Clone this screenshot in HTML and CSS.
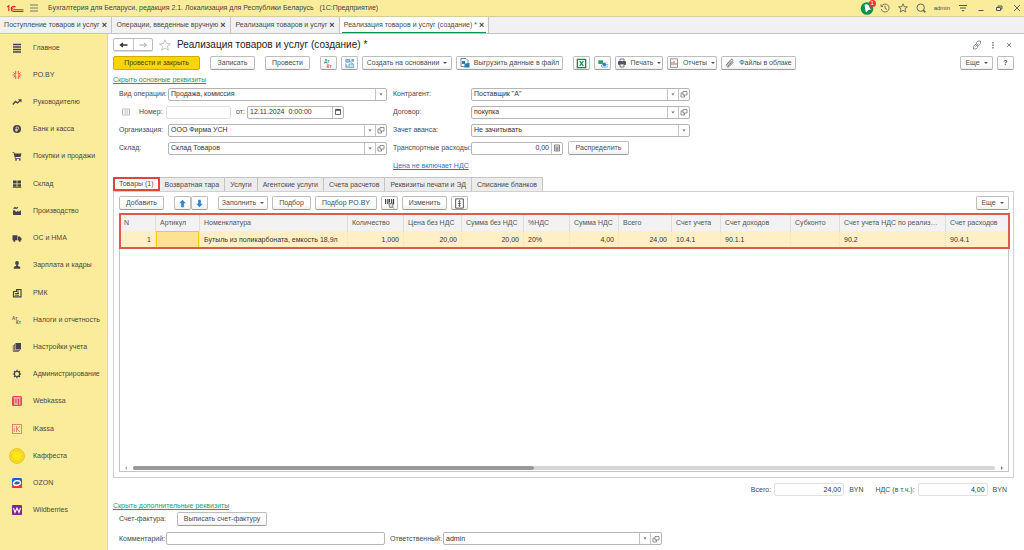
FILE: index.html
```
<!DOCTYPE html>
<html lang="ru">
<head>
<meta charset="utf-8">
<title>Бухгалтерия для Беларуси</title>
<link rel="stylesheet" href="styles.css">
</head>
<body>
<svg class="defs" aria-hidden="true">
  <symbol id="open" viewBox="0 0 8 8"><path d="M3 1.500h4v3.500h-4zM3 3H1v4h3.500V5" fill="none" stroke="#777" stroke-width=".8"/></symbol>
  <symbol id="caret" viewBox="0 0 8 8"><path d="M2.400 3h3.200L4 5z" fill="#666"/></symbol>
</svg>
<div class="app">
<header class="titlebar">
  <svg class="logo" viewBox="0 0 32 16"><g fill="none" stroke="#d8262c" stroke-width="2"><path d="M2 5.500 5 3v10"/><path d="M17 5.500A4.500 4.500 0 1 0 13 13h18"/><path d="M15 7A2 2 0 1 0 13 10h18" stroke-width="1.500"/></g></svg>
  <button class="ghost burger" aria-label="Меню"><svg viewBox="0 0 10 10"><path d="M1 2h8M1 5h8M1 8h8" stroke="#666" stroke-width=".9"/></svg></button>
  <span class="apptitle">Бухгалтерия для Беларуси, редакция 2.1. Локализация для Республики Беларусь&nbsp;&nbsp; (1С:Предприятие)</span>
  <div class="sys">
    <button class="ghost bell" aria-label="Уведомления"><svg viewBox="0 0 14 14"><circle cx="7" cy="7.500" r="6.300" fill="#0b9150"/><path d="M4.500 4c1.500-1.500 4.500-.5 5 2.500l1.500 2-3 .8-2 2.200-.5-2z" fill="#fff"/></svg><span class="badge">1</span></button>
    <button class="ghost" aria-label="История"><svg viewBox="0 0 10 10"><path d="M1.500 3.200A4 4 0 1 1 1.200 6M1 1.500v2h2M5 2.500V5.200L7 6.500" fill="none" stroke="#555" stroke-width=".8"/></svg></button>
    <button class="ghost" aria-label="Избранное"><svg viewBox="0 0 10 10"><path d="M5 .8l1.200 2.900 3.200.2-2.400 2 .8 3.100L5 7.300 2.200 9 3 5.900l-2.400-2 3.200-.2z" fill="none" stroke="#555" stroke-width=".8"/></svg></button>
    <button class="ghost" aria-label="Поиск"><svg viewBox="0 0 10 10"><circle cx="4.700" cy="4.700" r="3.700" fill="none" stroke="#555" stroke-width=".9"/><path d="M7 7l2.300 2.300" stroke="#555" stroke-width="1.500"/></svg></button>
    <span class="user">admin</span>
    <button class="ghost" aria-label="Настройки"><svg viewBox="0 0 10 10"><path d="M1 2.500h8M2 5h6" stroke="#555"/><path d="M3.500 7h3L5 8.800z" fill="#555"/></svg></button>
    <button class="ghost win" aria-label="Свернуть"><svg viewBox="0 0 10 10"><path d="M2.500 7.500h5" stroke="#555"/></svg></button>
    <button class="ghost win" aria-label="Восстановить"><svg viewBox="0 0 10 10"><path d="M2.500 4.500h4v3h-4zM4 4.500V3h4v3H6.500" fill="none" stroke="#555"/></svg></button>
    <button class="ghost win" aria-label="Закрыть"><svg viewBox="0 0 10 10"><path d="M2 2l6 6M8 2L2 8" stroke="#555" stroke-width=".9"/></svg></button>
  </div>
</header>
<nav class="wintabs">
  <a href="#" class="wt wt1">Поступление товаров и услуг <b>×</b></a>
  <a href="#" class="wt wt2">Операции, введенные вручную <b>×</b></a>
  <a href="#" class="wt wt3">Реализация товаров и услуг <b>×</b></a>
  <a href="#" class="wt wt4 active"><span>Реализация товаров и услуг (создание) * <b>×</b></span></a>
</nav>
<div class="body">
<nav class="side">
  <a href="#"><svg viewBox="0 0 10 10"><path d="M1 1.500h8M1 4h8M1 6.500h8M1 9h8" stroke="#45414d" stroke-width="1.300"/></svg>Главное</a>
  <a href="#"><svg viewBox="0 0 10 10"><path d="M3.700 1v3M6.300 1v3M3.700 6v3M6.300 6v3M.5 5h3M6.500 5h3M1.500 2.500L3.500 4.500M8.500 2.500L6.500 4.500M1.500 7.500l2-2M8.500 7.500l-2-2" stroke="#e0353c" stroke-width=".8"/></svg>PO.BY</a>
  <a href="#"><svg viewBox="0 0 10 10"><path d="M.8 7.500L3.500 4.500 5.500 6 8.500 3" fill="none" stroke="#45414d" stroke-width="1.300"/><path d="M6 2.200h3.500v3.300z" fill="#45414d"/></svg>Руководителю</a>
  <a href="#"><svg viewBox="0 0 10 10"><circle cx="5" cy="5" r="4" fill="#45414d"/><path d="M4.200 7.800V3h1.300a1.200 1.200 0 0 1 0 2.500H3.300M3.300 6.600h2.500" fill="none" stroke="#f9ec9c" stroke-width=".8"/></svg>Банк и касса</a>
  <a href="#"><svg viewBox="0 0 10 10"><path d="M.5 1.200h1.700l.5 1.300h6.800L8.500 6H3.300l.3 1h5v.8H3L1.600 2H.5z" fill="#45414d"/><circle cx="4" cy="8.800" r=".9" fill="#45414d"/><circle cx="7.800" cy="8.800" r=".9" fill="#45414d"/></svg>Покупки и продажи</a>
  <a href="#"><svg viewBox="0 0 10 10"><path d="M1 1.500h3.600v3H1zM5.400 1.500H9v3H5.400zM1 5.200h3.600v2.600H1zM5.400 5.200H9v2.600H5.400zM.7 8.200h8.600V9H.7z" fill="#45414d"/></svg>Склад</a>
  <a href="#"><svg viewBox="0 0 10 10"><path d="M1 9V4.500L2.500 4 4 6l2.500-1.500V6L9 4.200V9z" fill="#45414d"/><path d="M1.500 2.800L3 1.500l1 1L6 1.300" fill="none" stroke="#45414d" stroke-width="1.200"/></svg>Производство</a>
  <a href="#"><svg viewBox="0 0 10 10"><path d="M.5 2.300h5v5h-5zM6 3.500h2l1.500 2v1.800H6z" fill="#45414d"/><circle cx="2.300" cy="7.800" r="1.100" fill="#45414d"/><circle cx="7.700" cy="7.800" r="1.100" fill="#45414d"/></svg>ОС и НМА</a>
  <a href="#"><svg viewBox="0 0 10 10"><circle cx="5" cy="3" r="1.900" fill="#45414d"/><path d="M4.200 4.500h1.600v1.300L8.200 7v1.800H1.800V7l2.400-1.200z" fill="#45414d"/></svg>Зарплата и кадры</a>
  <a href="#"><svg viewBox="0 0 10 10"><path d="M1.500 3.500h3V1.500H9v7.300H1.500z" fill="none" stroke="#45414d" stroke-width="1.200"/><path d="M3 5.500h4M3 7.200h4M6 2v3" stroke="#45414d"/></svg>РМК</a>
  <a href="#"><svg viewBox="0 0 10 10"><text x="0" y="4.500" font-size="4.500" font-weight="bold" fill="#666052">Ат</text><text x="4" y="9" font-size="4.500" font-weight="bold" fill="#666052">Кт</text></svg>Налоги и отчетность</a>
  <a href="#"><svg viewBox="0 0 10 10"><path d="M3.500 1H9v6.500H3.500z" fill="#45414d"/><path d="M2.500 2v6.500H8M1.300 3v6.500h5.500" fill="none" stroke="#45414d" stroke-width=".7"/></svg>Настройки учета</a>
  <a href="#"><svg viewBox="0 0 10 10"><circle cx="5" cy="5" r="2.600" fill="none" stroke="#45414d" stroke-width="1.200"/><path d="M5 .8v1.500M5 7.700v1.500M.8 5h1.500M7.700 5h1.500M2 2l1 1M7 7l1 1M8 2L7 3M3 7L2 8" stroke="#45414d" stroke-width="1.200"/></svg>Администрирование</a>
  <a href="#"><svg viewBox="0 0 10 10"><rect width="10" height="10" rx="1.500" fill="#e64450"/><path d="M1.500 2h7M2 4h1.500M4.500 4H6M7 4h1.500M2 6h1.500M4.500 6H6M7 6h1.500M2 8h4M7 8h1.500" stroke="#fff"/></svg>Webkassa</a>
  <a href="#"><svg viewBox="0 0 10 10"><rect x=".5" y=".5" width="9" height="9" fill="none" stroke="#dc6b5e" stroke-width=".8"/><path d="M2.200 4v4M2.200 2v1M4.500 2v6M7.800 2L5 5l3 3" fill="none" stroke="#dc6b5e" stroke-width=".8"/></svg>iKassa</a>
  <a href="#"><svg class="coin" viewBox="0 0 16 16"><circle cx="8" cy="8" r="7.400" fill="#ffe51c" stroke="#d9b51d" stroke-width=".8"/><circle cx="8" cy="8" r="5.400" fill="none" stroke="#d9b51d" stroke-width=".8" stroke-dasharray="1 .6"/></svg>Каффеста</a>
  <a href="#"><svg viewBox="0 0 10 10"><rect width="10" height="10" rx="1.500" fill="#1b5fc4"/><path d="M0 7l10-2v3.500a1.500 1.500 0 0 1-1.500 1.500h-7A1.500 1.500 0 0 1 0 8.500z" fill="#e63242"/><ellipse cx="5" cy="5" rx="3.500" ry="2.200" fill="none" stroke="#fff" stroke-width="1.500" transform="rotate(-12 5 5)"/></svg>OZON</a>
  <a href="#"><svg viewBox="0 0 10 10"><rect width="10" height="10" rx="1" fill="#7b2a8c"/><path d="M1.500 3l1.500 4.500L5 3l2 4.500L8.500 3" fill="none" stroke="#fff" stroke-width="1.100"/></svg>Wildberries</a>
</nav>
<main class="doc">
  <div class="head">
    <div class="histnav"><button aria-label="Назад"><svg viewBox="0 0 10 10"><path d="M1.500 5h7M4 3L1.500 5 4 7" fill="none" stroke="#333" stroke-width="1.400"/></svg></button><button aria-label="Вперед"><svg viewBox="0 0 10 10"><path d="M1.500 5h7M6 3l2.500 2L6 7" fill="none" stroke="#aaa"/></svg></button></div>
    <svg class="star" viewBox="0 0 12 12"><path d="M6 .8l1.500 3.700 3.900.3-3 2.500 1 3.900L6 9l-3.400 2.200 1-3.900-3-2.500 3.900-.3z" fill="none" stroke="#aaa" stroke-width=".7"/></svg>
    <h1>Реализация товаров и услуг (создание) *</h1>
    <div class="headtools">
      <button class="ghost" aria-label="Ссылка"><svg viewBox="0 0 10 10"><path d="M4.500 4V2.500L6 1h2.500v2.500L7 5.500H5.500M5.500 6v1.500L4 9H1.500V6.500L3 4.500h1.500M3.500 6.500l3-3" fill="none" stroke="#777" stroke-width=".8"/></svg></button>
      <button class="ghost" aria-label="Действия"><svg viewBox="0 0 10 10"><path d="M5 2v1.500M5 4.500V6M5 7v1.500" stroke="#555" stroke-width="1.200"/></svg></button>
      <button class="ghost" aria-label="Закрыть форму"><svg viewBox="0 0 10 10"><path d="M3 3l4 4M7 3L3 7" stroke="#666" stroke-width=".8"/></svg></button>
    </div>
  </div>
  <div class="bar">
    <button class="btn primary">Провести и закрыть</button>
    <button class="btn w45">Записать</button>
    <button class="btn w45">Провести</button>
    <div class="group">
      <button class="btn icon" aria-label="Дт Кт"><svg viewBox="0 0 12 12"><text x="1" y="5" font-size="5" font-weight="bold" fill="#3a9b68">Дт</text><text x="4" y="10.500" font-size="5" font-weight="bold" fill="#e05252">Кт</text></svg></button>
      <button class="btn icon" aria-label="Структура"><svg viewBox="0 0 12 12"><path d="M2 1.500h4v3H2zM2 6v4h3M6 3l4 4" fill="#a8cce4" stroke="#4d8fb5" stroke-width=".8"/><path d="M5.500 6.500h5v4h-5z" fill="#cfe3ef" stroke="#5e98b5" stroke-width=".8"/><path d="M8 1h3v3H8z" fill="#6eaaca"/></svg></button>
      <button class="btn w90">Создать на основании <i class="car"></i></button>
      <button class="btn w107"><svg viewBox="0 0 10 10"><path d="M1 .5h5l2 2v6H1z" fill="#fff" stroke="#567" stroke-width=".8"/><path d="M2 3h3v3H2z" fill="#267fb5"/><path d="M4.500 5.500L9.500 5v4.500h-5z" fill="#267fb5"/></svg>Выгрузить данные в файл</button>
    </div>
    <div class="group">
      <button class="btn icon" aria-label="Excel"><svg viewBox="0 0 12 12"><path d="M1.500 1.500h9v9h-9z" fill="#fff" stroke="#14894a" stroke-width="1.500"/><path d="M4 3.500l4 5M8 3.500l-4 5" stroke="#14894a" stroke-width="1.300"/></svg></button>
      <button class="btn icon" aria-label="Обмен"><svg viewBox="0 0 12 12"><path d="M1.500 2.500h5v4h-5z" fill="#2e9b67"/><circle cx="8" cy="7" r="2" fill="#2a86c8"/><path d="M5 8v2h6V5" fill="none" stroke="#2a86c8" stroke-dasharray="1.500 1"/></svg></button>
      <button class="btn w48"><svg viewBox="0 0 10 10"><path d="M3 3V1h4v2" fill="#fff" stroke="#555" stroke-width=".8"/><rect x="1" y="3" width="8" height="4" rx="1" fill="#4c5a6b"/><path d="M3 6h4v3H3z" fill="#fff" stroke="#555" stroke-width=".8"/></svg>Печать <i class="car"></i></button>
      <button class="btn w50"><svg viewBox="0 0 10 10"><path d="M1.500.8h7v8.500h-7z" fill="#fff" stroke="#777" stroke-width=".8"/><path d="M3 4v3M5 3v4" stroke="#d94b4b"/><path d="M7 5v2" stroke="#3a9b68"/></svg>Отчеты <i class="car"></i></button>
      <button class="btn w75"><svg viewBox="0 0 10 10"><path d="M2 6l4-4.500c1-1 2.500.3 1.700 1.300L4 7.500c-.6.600-1.500-.2-1-.9L6 3.300M2 6C.5 8 3 10 4.500 8.200L8.500 4" fill="none" stroke="#666" stroke-width=".9"/></svg>Файлы в облаке</button>
    </div>
    <div class="group right"><button class="btn w33">Еще <i class="car"></i></button><button class="btn icon help">?</button></div>
  </div>
  <a href="#" class="toggle">Скрыть основные реквизиты</a>
  <div class="form">
    <div class="col">
      <div class="row"><label for="op">Вид операции:</label><div class="field"><div class="pick"><select id="op"><option>Продажа, комиссия</option></select><svg><use href="#caret"/></svg></div></div></div>
      <div class="row numrow">
        <svg class="lines" viewBox="0 0 8 8"><path d="M.5 1h7v6h-7zM2 3h4M2 5h4" fill="none" stroke="#aaa" stroke-width=".8"/></svg>
        <label for="num">Номер:</label><input id="num" class="pale">
        <label for="date">от:</label><div class="field date"><input id="date" value="12.11.2024  0:00:00"><button aria-label="Календарь"><svg viewBox="0 0 8 8"><path d="M1.500 1.500h5v5h-5z" fill="none" stroke="#444" stroke-width=".8"/><path d="M1.500 2h5" stroke="#444" stroke-width="1.500"/></svg></button></div>
      </div>
      <div class="row"><label for="org">Организация:</label><div class="field"><div class="pick"><select id="org"><option>ООО Фирма УСН</option></select><svg><use href="#caret"/></svg></div><button aria-label="Открыть"><svg><use href="#open"/></svg></button></div></div>
      <div class="row"><label for="wh">Склад:</label><div class="field"><div class="pick"><select id="wh"><option>Склад Товаров</option></select><svg><use href="#caret"/></svg></div><button aria-label="Открыть"><svg><use href="#open"/></svg></button></div></div>
    </div>
    <div class="col wide">
      <div class="row"><label for="ka">Контрагент:</label><div class="field"><div class="pick"><select id="ka"><option>Поставщик "А"</option></select><svg><use href="#caret"/></svg></div><button aria-label="Открыть"><svg><use href="#open"/></svg></button></div></div>
      <div class="row"><label for="dog">Договор:</label><div class="field"><div class="pick"><select id="dog"><option>покупка</option></select><svg><use href="#caret"/></svg></div><button aria-label="Открыть"><svg><use href="#open"/></svg></button></div></div>
      <div class="row"><label for="av">Зачет аванса:</label><div class="field"><div class="pick"><select id="av"><option>Не зачитывать</option></select><svg><use href="#caret"/></svg></div></div></div>
      <div class="row"><label for="tr">Транспортные расходы:</label><div class="field sum"><input id="tr" value="0,00"><button aria-label="Калькулятор"><svg viewBox="0 0 8 8"><path d="M1.500 1h5v6h-5zM2 3h4M2 5h4M4 3v4" fill="none" stroke="#666" stroke-width=".8"/></svg></button></div><button class="btn w61">Распределить</button></div>
      <div class="row"><a href="#" class="vat">Цена не включает НДС</a></div>
    </div>
  </div>
  <div class="tabs">
    <button class="tab on">Товары (1)</button><button class="tab">Возвратная тара</button><button class="tab">Услуги</button><button class="tab">Агентские услуги</button><button class="tab">Счета расчетов</button><button class="tab">Реквизиты печати и ЭД</button><button class="tab">Списание бланков</button>
  </div>
  <section class="panel">
    <div class="cmds">
      <button class="btn w45">Добавить</button>
      <div class="pair"><button class="btn icon" aria-label="Вверх"><svg viewBox="0 0 10 10"><path d="M5 1.500l3 3.300H6.200v3.700H3.800V4.800H2z" fill="#2f86cc"/></svg></button><button class="btn icon" aria-label="Вниз"><svg viewBox="0 0 10 10"><path d="M5 8.500l3-3.300H6.200V1.500H3.800v3.700H2z" fill="#2f86cc"/></svg></button></div>
      <div class="group">
        <button class="btn w50">Заполнить <i class="car"></i></button>
        <button class="btn w39">Подбор</button>
        <button class="btn w62">Подбор PO.BY</button>
        <button class="btn icon" aria-label="Штрихкод"><svg viewBox="0 0 10 10"><path d="M1.500 1v4.500M3.500 1v4.500M5 1v3M7 1v4M8.700 1v5" stroke="#333"/><path d="M4.500 5h3.500v3.500h-3zM8 8.500l1 1" fill="#ddd" stroke="#777" stroke-width=".8"/></svg></button>
        <button class="btn w45">Изменить</button>
        <button class="btn icon" aria-label="Высота строк"><svg viewBox="0 0 10 10"><path d="M1.500.8h7v8.400h-7z" fill="#fff" stroke="#444" stroke-width=".8"/><path d="M5 2.300v5.400M3.500 5h3M4 3.300L5 2.300l1 1M4 6.700l1 1 1-1" fill="none" stroke="#444" stroke-width=".7"/></svg></button>
      </div>
      <button class="btn w33 more">Еще <i class="car"></i></button>
    </div>
    <div class="grid">
      <table>
        <colgroup><col class="c36"><col class="c44"><col class="c148"><col class="c56"><col class="c58"><col class="c62"><col class="c46"><col class="c49"><col class="c53"><col class="c49"><col class="c70"><col class="c49"><col class="c106"><col class="c63"></colgroup>
        <thead><tr><th>N</th><th>Артикул</th><th>Номенклатура</th><th>Количество</th><th>Цена без НДС</th><th>Сумма без НДС</th><th>%НДС</th><th>Сумма НДС</th><th>Всего</th><th>Счет учета</th><th>Счет доходов</th><th>Субконто</th><th>Счет учета НДС по реализации</th><th>Счет расходов</th></tr></thead>
        <tbody><tr><td class="n">1</td><td class="cur"></td><td>Бутыль из поликарбоната, емкость 18,9л</td><td class="n">1,000</td><td class="n">20,00</td><td class="n">20,00</td><td>20%</td><td class="n">4,00</td><td class="n">24,00</td><td>10.4.1</td><td>90.1.1</td><td></td><td>90.2</td><td>90.4.1</td></tr></tbody>
      </table>
      <div class="scroll"><i class="sl"></i><div class="track"><div class="thumb"></div></div><i class="sr"></i></div>
    </div>
  </section>
  <div class="totals">
    <label for="tot">Всего:</label><input id="tot" class="pale" value="24,00" readonly><span class="unit">BYN</span>
    <label for="nds">НДС (в т.ч.):</label><input id="nds" class="pale" value="4,00" readonly><span>BYN</span>
  </div>
  <a href="#" class="toggle">Скрыть дополнительные реквизиты</a>
  <div class="invoice"><span>Счет-фактура:</span><button class="btn w90">Выписать счет-фактуру</button></div>
  <div class="comment"><label for="com">Комментарий:</label><input id="com"><label for="resp">Ответственный:</label><div class="field"><div class="pick"><select id="resp"><option>admin</option></select><svg><use href="#caret"/></svg></div><button aria-label="Открыть"><svg><use href="#open"/></svg></button></div></div>
</main>
</div>
</div>
</body>
</html>
```
FILE: styles.css
```
* { box-sizing: border-box; }
html, body { height: 100%; }
body { margin: 0; font: 7px/10px "Liberation Sans", Arial, sans-serif; color: #4a4a4a; background: #fff; }
button, input, select { font: inherit; color: inherit; margin: 0; padding: 0; border: 0; background: none; min-width: 0; outline: none; }
a { color: inherit; text-decoration: none; }
svg { display: block; width: 10px; height: 10px; flex: none; font-family: "Liberation Sans", Arial, sans-serif; }
.defs { position: absolute; width: 0; height: 0; }
.app { min-height: 100%; display: flex; flex-direction: column; }
.ghost { display: grid; place-items: center; }

.titlebar { height: 17px; display: flex; align-items: center; background: #fbec9c; border-bottom: 1px solid #d5cda0; padding: 0 2px 0 6px; }
.logo { width: 18px; height: 9px; }
.burger { margin: 0 9px 0 5px; }
.apptitle { flex: 1; color: #444; white-space: nowrap; }
.sys { display: flex; align-items: center; gap: 8px; }
.bell { position: relative; width: 10px; }
.bell svg { width: 14px; height: 14px; margin: 0 -2px; }
.badge { position: absolute; top: -1px; right: -4px; width: 7px; height: 7px; border-radius: 50%; background: #ec3237; color: #fff; font-size: 6px; line-height: 7px; text-align: center; }
.user { font-size: 6px; }

.wintabs { height: 17px; display: flex; background: #f1f1f1; border-bottom: 1px solid #c4c4c4; }
.wt { display: flex; align-items: center; justify-content: center; border-right: 1px solid #c4c4c4; white-space: nowrap; }
.wt b { font-size: 9px; line-height: 7px; margin-left: 2px; color: #444; }
.wt1 { width: 112px; }
.wt2 { width: 119px; }
.wt3 { width: 109px; }
.wt4 { width: 149px; }
.active { background: #fff; align-items: stretch; padding: 1px 2px; }
.active span { flex: 1; display: flex; align-items: center; justify-content: center; box-shadow: 0 1px 0 #0b9150; }

.body { flex: 1; display: flex; }
.side { flex: none; width: 108px; display: flex; flex-direction: column; padding-bottom: 27px; background: #fbec9c; border-right: 1px solid #e3d68b; color: #4b4640; }
.side a { flex: 1; display: grid; grid-template-columns: 33px 1fr; align-items: center; white-space: nowrap; }
.side svg { justify-self: center; }
.side .coin { width: 16px; height: 16px; }

.doc { flex: 1; min-width: 0; padding: 3px 10px 6px 5px; }
.head { display: flex; align-items: center; height: 15px; }
.histnav { display: flex; border: 1px solid #bbb; border-radius: 2px; box-shadow: 0 1px 0 #ddd; }
.histnav button { width: 19px; height: 11px; display: grid; place-items: center; }
.histnav button + button { border-left: 1px solid #ccc; }
.star { width: 12px; height: 12px; margin: 0 6px 0 6px; }
h1 { margin: 0; flex: 1; font-size: 10px; font-weight: 400; line-height: 14px; color: #222; }
.headtools { display: flex; gap: 6px; }

.btn { height: 14px; display: flex; align-items: center; justify-content: center; gap: 4px; border: 1px solid #bdbdbd; border-bottom-color: #9c9c9c; border-radius: 2px; background: linear-gradient(#fff 60%, #f0f0f0); white-space: nowrap; flex: none; }
.icon { width: 17px; }
.icon svg { width: 11px; height: 11px; }
.help { font-weight: 700; }
.primary { width: 87px; background: #fbd408; border-color: #d0ac00; color: #4a3f10; }
.w33 { width: 33px; } .w39 { width: 39px; } .w45 { width: 45px; } .w48 { width: 48px; } .w50 { width: 50px; }
.w61 { width: 61px; } .w62 { width: 62px; } .w75 { width: 75px; } .w90 { width: 90px; } .w107 { width: 107px; }
.car { border: 2px solid transparent; border-top-color: #555; border-bottom: 0; }
.bar { display: flex; gap: 10px; margin-top: 4px; }
.group { display: flex; gap: 4px; }
.right { margin-left: auto; }

.toggle { display: block; width: max-content; color: #2a9a62; text-decoration: underline; }
.bar + .toggle { margin-top: 5px; }
.form { display: grid; grid-template-columns: 274px 1fr; padding-left: 6px; margin-bottom: 2px; }
.row { display: flex; align-items: center; height: 18px; }
.row label { width: 49px; white-space: nowrap; }
.wide .row label { width: 78px; }
.field { display: flex; width: 219px; height: 13px; border: 1px solid #b5b5b5; border-radius: 2px; background: #fff; color: #333; }
.field > input { flex: 1; padding: 0 2px; white-space: pre; }
.field button { width: 11px; display: grid; place-items: center; border-left: 1px solid #c4c4c4; flex: none; }
.field svg { width: 8px; height: 8px; }
.pick { flex: 1; display: grid; grid-template-columns: 1fr 11px; align-items: stretch; }
.pick select { grid-area: 1 / 1 / 2 / 3; appearance: none; padding: 0 2px; }
.pick svg { grid-area: 1 / 2; width: 11px; height: 100%; border-left: 1px solid #c4c4c4; padding: 1px; pointer-events: none; }
.numrow .lines { width: 8px; height: 8px; margin: 0 9px 0 3px; }
.numrow label { width: 27px; }
.numrow .pale { width: 65px; margin-right: 5px; }
.numrow .pale + label { width: 11px; }
.row .date { width: 97px; }
.pale { height: 13px; border: 1px solid #e0e0e0; border-radius: 2px; color: #333; }
.row .sum { width: 92px; margin-right: 5px; }
.sum input { text-align: right; }
.vat { color: #2a76ba; text-decoration: underline; }

.tabs { display: flex; }
.tab { height: 14px; padding: 0 5px; border: 1px solid #c4c4c4; border-left: 0; border-bottom: 0; background: #ececec; white-space: nowrap; }
.tab.on { background: #fff; border: 2px solid #e0453c; padding: 0 4px; }
.panel { border: 1px solid #d0d0d0; padding: 4px 4px 5px 5px; height: 287px; display: flex; flex-direction: column; }
.cmds { display: flex; }
.pair { display: flex; margin: 0 10px; }
.more { margin-left: auto; }
.grid { flex: 1; margin-top: 3px; border: 1px solid #c4c4c4; display: flex; flex-direction: column; }
table { width: 100%; border-collapse: separate; border-spacing: 0; table-layout: fixed; color: #333; outline: 2px solid #df5a50; outline-offset: -1px; }
th, td { height: 17px; padding: 0 4px; text-align: left; font-weight: 400; white-space: nowrap; overflow: hidden; text-overflow: ellipsis; }
th { background: #f2f2f2; border-right: 1px solid #dedede; color: #555; }
td { background: #fef0c4; border-right: 1px dotted #ece2bd; }
.n { text-align: right; }
.cur { background: #fde293; box-shadow: inset 0 0 0 1px #f0d000; }
.c36 { width: 36px; } .c44 { width: 44px; } .c148 { width: 148px; } .c56 { width: 56px; } .c58 { width: 58px; } .c62 { width: 62px; } .c46 { width: 46px; }
.c49 { width: 49px; } .c53 { width: 53px; } .c70 { width: 70px; } .c106 { width: 106px; } .c63 { width: 63px; }
.scroll { margin-top: auto; display: flex; align-items: center; gap: 6px; padding: 0 5px 1px; }
.track { flex: 1; height: 4px; border-radius: 2px; background: #d5d5d5; }
.thumb { width: 46.500%; height: 4px; border-radius: 2px; background: #999; }
.sl, .sr { border: 2px solid transparent; }
.sl { border-right-color: #aaa; border-left: 0; }
.sr { border-left-color: #777; border-right: 0; }

.totals { display: flex; align-items: center; justify-content: flex-end; margin: 5px 7px 5px 0; }
.totals .pale { width: 70px; text-align: right; padding-right: 2px; margin: 0 5px 0 3px; }
.unit { margin-right: 12px; }
.invoice { display: flex; align-items: center; padding-left: 6px; margin-top: 1px; }
.invoice span { width: 58px; }
.comment { display: flex; align-items: center; padding-left: 6px; margin-top: 6px; }
.comment label { width: 47px; }
.comment > input { width: 219px; height: 13px; border: 1px solid #b5b5b5; border-radius: 2px; margin-right: 5px; }
.comment > input + label { width: 53px; }
```
